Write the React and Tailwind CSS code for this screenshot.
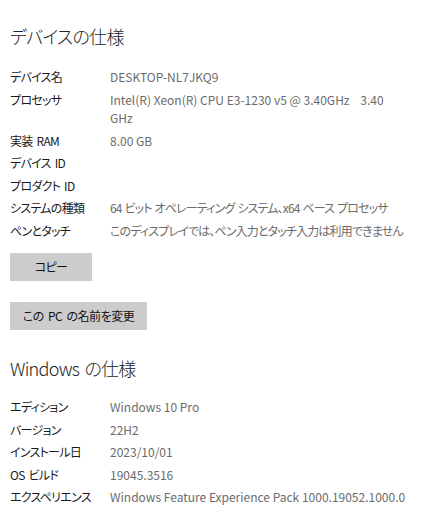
const device = [
  ["デバイス名", "DESKTOP-NL7JKQ9"],
  ["プロセッサ", "Intel(R) Xeon(R) CPU E3-1230 v5 @ 3.40GHz\u00a0\u00a0\u00a0\u00a03.40 GHz"],
  ["実装 RAM", "8.00 GB"],
  ["デバイス ID", ""],
  ["プロダクト ID", ""],
  ["システムの種類", "64 ビット オペレーティング システム、x64 ベース プロセッサ", true],
  ["ペンとタッチ", "このディスプレイでは、ペン入力とタッチ入力は利用できません", true],
];

const windows = [
  ["エディション", "Windows 10 Pro"],
  ["バージョン", "22H2"],
  ["インストール日", "2023/10/01"],
  ["OS ビルド", "19045.3516"],
  ["エクスペリエンス", "Windows Feature Experience Pack 1000.19052.1000.0"],
];

function SpecTable({ rows }) {
  return (
    <div className="grid grid-cols-[100px_1fr] gap-y-1 pr-[37px] text-[12px] leading-[18.5px]">
      {rows.map(([k, v, jp]) => (
        <div key={k} className="contents">
          <div className="tracking-[-0.06em] text-[#1a1a1a] [word-spacing:2px]">{k}</div>
          <div className={jp ? "tracking-[-0.07em] text-[#6b6b6b] [word-spacing:1px]" : "text-[#6b6b6b]"}>{v}</div>
        </div>
      ))}
    </div>
  );
}

export default function App() {
  return (
    <div
      className="h-[512px] w-[445px] overflow-hidden bg-white pl-[10px] pt-[22px] [font-feature-settings:'palt']"
      style={{ fontFamily: '"Noto Sans CJK JP", "Noto Sans", sans-serif' }}
    >
      <h2 className="text-[18px] font-light leading-[28px] tracking-[-0.04em] text-[#222]">デバイスの仕様</h2>
      <div className="mt-[18px]">
        <SpecTable rows={device} />
      </div>
      <button className="mt-[13px] block h-[28px] w-[82px] bg-[#cccccc] text-[12px] tracking-[-0.06em] text-[#111]">コピー</button>
      <button className="mt-[21px] block h-[28px] w-[137px] bg-[#cccccc] text-[12px] tracking-[-0.04em] text-[#111] [word-spacing:2px]">この PC の名前を変更</button>
      <h2 className="mt-[24px] text-[18px] font-light leading-[28px] tracking-[-0.04em] text-[#222] [word-spacing:2px]">Windows の仕様</h2>
      <div className="mt-[16px]">
        <SpecTable rows={windows} />
      </div>
    </div>
  );
}
